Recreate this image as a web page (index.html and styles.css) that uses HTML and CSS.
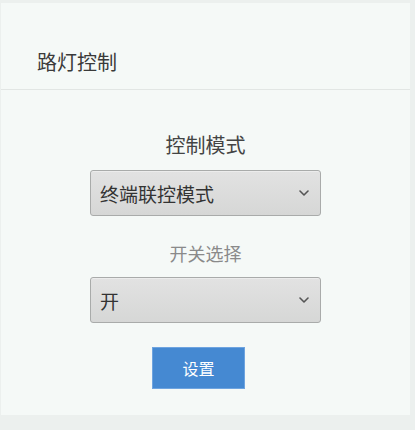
FILE: index.html
```html
<!DOCTYPE html>
<html lang="zh">
<head>
<meta charset="utf-8">
<link rel="stylesheet" href="styles.css">
</head>
<body>
<div class="panel">
  <div class="panel-header">
    <h1 class="title">路灯控制</h1>
  </div>
  <div class="panel-body">
    <div class="label label-main">控制模式</div>
    <div class="select">
      <span class="select-text">终端联控模式</span>
      <svg class="chevron" width="10" height="6" viewBox="0 0 10 6"><path d="M1 1 L5 5 L9 1" fill="none" stroke="#555" stroke-width="1.6" stroke-linecap="round" stroke-linejoin="round"/></svg>
    </div>
    <div class="label label-sub">开关选择</div>
    <div class="select">
      <span class="select-text">开</span>
      <svg class="chevron" width="10" height="6" viewBox="0 0 10 6"><path d="M1 1 L5 5 L9 1" fill="none" stroke="#555" stroke-width="1.6" stroke-linecap="round" stroke-linejoin="round"/></svg>
    </div>
    <button class="btn">设置</button>
  </div>
</div>
</body>
</html>
```

FILE: styles.css
```css
html, body {
  margin: 0;
  padding: 0;
}
body {
  background: #ecf0ee;
  font-family: "Noto Sans CJK SC", "Noto Sans", sans-serif;
  width: 415px;
  height: 430px;
  overflow: hidden;
  padding-top: 3px;
  box-sizing: border-box;
}
.panel {
  margin-left: 1px;
  width: 409px;
  background: #f5f9f7;
  height: 412px;
}
.panel-header {
  height: 87px;
  box-sizing: border-box;
  border-bottom: 1px solid #e2e6e4;
  padding: 46px 0 0 36px;
}
.title {
  margin: 0;
  font-size: 20px;
  font-weight: normal;
  line-height: 26px;
  color: #3a3a3a;
}
.panel-body {
  display: flex;
  flex-direction: column;
  align-items: center;
  padding-top: 41px;
}
.label {
  line-height: 28px;
  text-align: center;
}
.label-main {
  font-size: 20px;
  color: #444;
}
.label-sub {
  font-size: 18px;
  color: #8a8a8a;
  margin-top: 24px;
  line-height: 26px;
}
.select {
  margin-top: 11px;
  width: 231px;
  height: 46px;
  box-sizing: border-box;
  border: 1px solid #a9abaa;
  border-radius: 3px;
  background: linear-gradient(#e2e2e2, #d6d7d6);
  box-shadow: inset 0 1px 0 #ececec;
  display: flex;
  align-items: center;
  justify-content: space-between;
  padding: 0 11px 0 9px;
}
.select-text {
  font-size: 19px;
  color: #333;
}
.chevron {
  display: block;
}
.btn {
  margin-top: 24px;
  margin-right: 14px;
  width: 93px;
  height: 42px;
  border: 1px solid #6ea4e0;
  background: #4589d2;
  color: #fff;
  font-family: "Noto Sans CJK SC", sans-serif;
  font-size: 16px;
  padding: 0;
}
```
